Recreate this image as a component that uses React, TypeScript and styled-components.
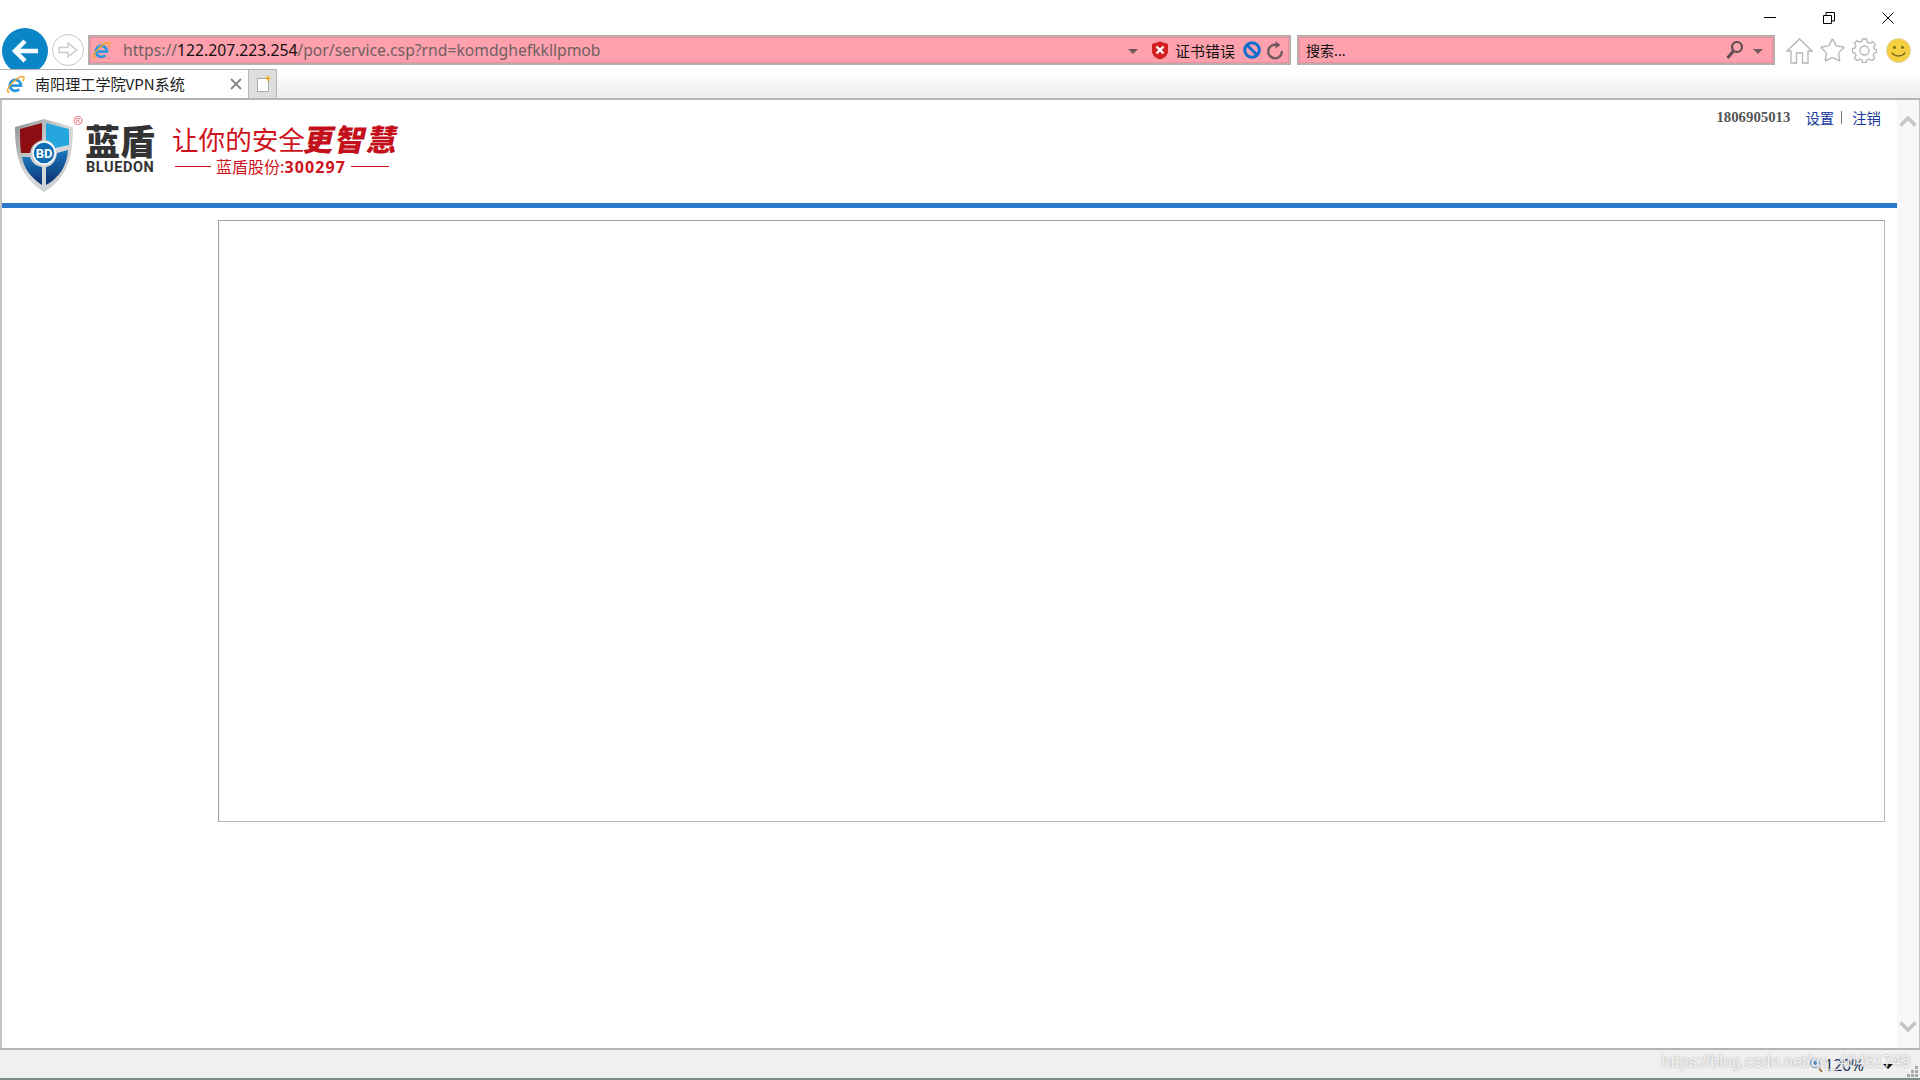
import React from 'react';
import styled, { createGlobalStyle } from 'styled-components';
import { Star } from 'lucide-react';

const GlobalStyle = createGlobalStyle`
  html, body {
    margin: 0;
    height: 100%;
    overflow: hidden;
    background: #fff;
  }
`;

const UI_FONT = `"Noto Sans", "Noto Sans CJK SC", sans-serif`;
const CJK_FONT = `"Noto Sans CJK SC", "Noto Sans", sans-serif`;

const Window = styled.div`
  width: 1920px;
  height: 1080px;
  display: flex;
  flex-direction: column;
  font-family: ${UI_FONT};
  color: #222;
  overflow: hidden;
  position: relative;
`;

const TitleBar = styled.div`
  height: 28px;
  flex: none;
  display: flex;
  justify-content: flex-end;
  align-items: flex-start;
  padding: 12px 26px 0 0;
  box-sizing: border-box;
  gap: 47px;
`;

const WindowButton = styled.svg`
  width: 12px;
  height: 12px;
  display: block;
  stroke: #000;
  fill: none;
`;

const Toolbar = styled.div`
  height: 41px;
  flex: none;
  display: flex;
  align-items: flex-start;
  padding-left: 2px;
`;

const BackButton = styled.div`
  width: 46px;
  height: 46px;
  flex: none;
  border-radius: 50%;
  background: #0a85c6;
  display: flex;
  align-items: center;
  justify-content: center;
`;

const ForwardButton = styled.div`
  width: 30px;
  height: 30px;
  flex: none;
  margin: 6px 0 0 4px;
  border: 1px solid #c9c9c9;
  border-radius: 50%;
  display: flex;
  align-items: center;
  justify-content: center;
`;

const Field = styled.div<{ $width: number; $left: number }>`
  width: ${(p) => p.$width}px;
  margin-left: ${(p) => p.$left}px;
  height: 30px;
  flex: none;
  margin-top: 7px;
  box-sizing: border-box;
  display: flex;
  align-items: center;
  background: #ffa1ad;
  border: 2px solid #b9adae;
  box-shadow: inset 0 0 0 1px #f48c9b;
  font-size: 15px;
  white-space: nowrap;
`;

const PageIcon = styled.span`
  display: flex;
  flex: none;
  margin: 0 12px 0 2px;
`;

const Url = styled.div`
  flex: 1;
  color: #6f6064;
  font-size: 15.7px;
  b {
    color: #111;
    font-weight: 400;
  }
`;

const Caret = styled.span<{ $dark?: boolean }>`
  width: 0;
  height: 0;
  flex: none;
  margin-top: 2px;
  border-left: 5px solid transparent;
  border-right: 5px solid transparent;
  border-top: 5px solid ${(p) => (p.$dark ? '#111' : '#6f5a5e')};
`;

const SearchCaret = styled(Caret)`
  margin: 2px 10px 0 9px;
`;

const CertShield = styled.svg`
  flex: none;
  margin-left: 13px;
`;

const CertText = styled.span`
  font-family: ${CJK_FONT};
  font-size: 15px;
  margin: 0 8px 0 6px;
  color: #111;
`;

const RefreshIcon = styled.svg`
  flex: none;
  margin: 0 5px 0 5px;
`;

const SearchHint = styled.div`
  flex: 1;
  padding-left: 7px;
  font-family: ${CJK_FONT};
  font-size: 14px;
  color: #111;
`;

const ToolIcons = styled.div`
  display: flex;
  align-items: center;
  gap: 6px;
  margin: 9px 0 0 11px;
`;

const Smiley = styled.svg`
  flex: none;
  margin-left: 3px;
`;

const TabRow = styled.div`
  height: 31px;
  flex: none;
  position: relative;
  display: flex;
  align-items: stretch;
  box-sizing: border-box;
  border-bottom: 2px solid #b4b4b4;
  background: linear-gradient(#ffffff 10%, #ececec 100%);
`;

const Tab = styled.div`
  width: 249px;
  box-sizing: border-box;
  display: flex;
  align-items: center;
  background: #fff;
  border-top: 1px solid #b4b4b4;
  border-right: 1px solid #b4b4b4;
  padding: 0 6px 0 6px;
`;

const TabTitle = styled.span`
  flex: 1;
  margin-left: 10px;
  padding-bottom: 2px;
  font-family: ${CJK_FONT};
  font-size: 15.1px;
  color: #222;
  white-space: nowrap;
`;

const NewTab = styled.div`
  width: 28px;
  box-sizing: border-box;
  padding-left: 2px;
  background: #dedede;
  border-top: 1px solid #b4b4b4;
  border-right: 1px solid #b4b4b4;
  display: flex;
  align-items: center;
  justify-content: center;
`;

const Viewport = styled.div`
  flex: 1;
  min-height: 0;
  display: flex;
  border-left: 2px solid #c4c4c4;
  border-right: 1px solid #c4c4c4;
  border-bottom: 2px solid #b4b4b4;
`;

const Page = styled.div`
  width: 1895px;
  flex: none;
  display: flex;
  flex-direction: column;
`;

const Banner = styled.div`
  height: 108px;
  flex: none;
  box-sizing: border-box;
  display: flex;
  align-items: flex-start;
  border-bottom: 5px solid #2b77c9;
  padding: 9px 16px 0 11px;
`;

const ShieldSvg = styled.svg`
  flex: none;
  margin-top: 7px;
`;

const Brand = styled.div`
  display: flex;
  flex-direction: column;
  width: 72px;
  margin-top: 14px;
  color: #333;
`;

const BrandName = styled.span`
  font-family: ${CJK_FONT};
  font-weight: 900;
  font-size: 35px;
  line-height: 33px;
  white-space: nowrap;
`;

const BrandLatin = styled.span`
  font-family: "Roboto", sans-serif;
  font-weight: 700;
  font-size: 14.5px;
  letter-spacing: 0.6px;
  line-height: 16px;
  margin: 4px 0 0 1px;
`;

const Slogan = styled.div`
  margin: 7px 0 0 15px;
  display: flex;
  flex-direction: column;
  color: #d0121b;
  width: 235px;
`;

const SloganTop = styled.div`
  display: flex;
  align-items: center;
  height: 36px;
  margin-top: 4px;
  font-family: ${CJK_FONT};
  font-size: 26.6px;
  white-space: nowrap;
`;

const Brush = styled.span`
  font-weight: 900;
  font-size: 30px;
  letter-spacing: 1.5px;
  transform: skewX(-12deg);
  color: #c4101a;
`;

const SloganBottom = styled.div`
  display: flex;
  align-items: center;
  gap: 5px;
  height: 20px;
  padding-left: 3px;
  font-family: ${CJK_FONT};
  font-size: 16px;
  white-space: nowrap;
  b {
    font-family: "Noto Sans", sans-serif;
    font-weight: 700;
    letter-spacing: 1.1px;
  }
`;

const Rule = styled.span<{ $width: number }>`
  width: ${(p) => p.$width}px;
  height: 1px;
  flex: none;
  background: #d0121b;
`;

const UserLinks = styled.div`
  margin: -4px 0 0 auto;
  display: flex;
  align-items: center;
  height: 24px;
  font-size: 14.4px;
`;

const UserName = styled.span`
  font-family: "Liberation Serif", serif;
  font-weight: 700;
  font-size: 14.8px;
  color: #555;
  margin-right: 15px;
`;

const NavLink = styled.a`
  font-family: ${CJK_FONT};
  color: #16399a;
`;

const Divider = styled.span`
  width: 1px;
  height: 13px;
  background: #777;
  margin: 0 10px 0 7px;
`;

const Frame = styled.div`
  width: 1667px;
  height: 602px;
  margin: 12px 0 0 216px;
  box-sizing: border-box;
  border: 1px solid #a0a0a0;
  border-right-color: #b8b8b8;
  border-bottom-color: #b8b8b8;
`;

const ScrollBar = styled.div`
  flex: 1;
  background: #f8f8f8;
  display: flex;
  flex-direction: column;
  justify-content: space-between;
  align-items: center;
  padding: 15px 0 15px;
`;

const StatusBar = styled.div`
  height: 28px;
  flex: none;
  background: #f0f0f0;
  border-bottom: 2px solid #7d8a8e;
  display: flex;
  align-items: center;
  justify-content: flex-end;
  position: relative;
`;

const Zoom = styled.div`
  display: flex;
  align-items: center;
  font-size: 15.5px;
  color: #1b1b1b;
  margin: 2px 27px 0 0;
`;

const ZoomValue = styled.span`
  margin: 0 19px 0 2px;
  color: #0f2a55;
`;

const Watermark = styled.span`
  position: absolute;
  right: 10px;
  top: 2px;
  font-family: "Liberation Sans", sans-serif;
  font-size: 16.2px;
  color: rgba(255, 255, 255, 0.85);
  text-shadow: 0 0 2px rgba(110, 110, 110, 0.7);
  white-space: nowrap;
`;

const Grip = styled.svg`
  position: absolute;
  right: 1px;
  bottom: 0;
  width: 12px;
  height: 12px;
  fill: #a8a8a8;
`;

const IeIcon = ({ size = 19 }: { size?: number }) => (
  <svg width={size} height={size} viewBox="0 0 20 20" fill="none">
    <path d="M3.8 11.2H15.6A5.8 5.8 0 1 0 13.9 15" stroke="#2d97dd" strokeWidth="2.9" />
    <path d="M4 17.5C1 19 0.5 16.5 3.5 12C7 6.5 14 1.5 17.5 1.5C19.5 1.5 19.5 3.5 17.5 6.5" stroke="#eda72c" strokeWidth="1.5" />
  </svg>
);

const ShieldLogo = () => (
  <ShieldSvg width="72" height="78" viewBox="0 0 72 78">
    <defs>
      <linearGradient id="silver" x1="0" y1="0" x2="1" y2="1">
        <stop offset="0" stopColor="#8c8f92" />
        <stop offset="0.5" stopColor="#d9dadb" />
        <stop offset="1" stopColor="#c6c7c8" />
      </linearGradient>
      <linearGradient id="blueLow" x1="0" y1="0" x2="0" y2="1">
        <stop offset="0" stopColor="#1a78bb" />
        <stop offset="1" stopColor="#0b2f70" />
      </linearGradient>
    </defs>
    <path d="M31 3 L60 11 C60 42 54 62 31 76 C8 62 2 42 2 11 Z" fill="url(#silver)" />
    <path d="M7 13 L29 7 V24 C22 26 18 30 17 37 H8 C7 30 7 20 7 13 Z" fill="#8e0d12" />
    <path d="M33 7 L56 13 V29 L42 32 C40 27 37 25 33 24 Z" fill="#25a6de" />
    <path d="M9 41 H17 C19 47 23 50 29 51 V69 C17 61 11 52 9 41 Z" fill="url(#blueLow)" />
    <path d="M33 51 C39 50 43 45 44 37 L55 34 C54 50 46 62 33 69 Z" fill="url(#blueLow)" />
    <circle cx="31" cy="37" r="11" fill="#0e6cb3" stroke="#fff" strokeWidth="1.5" />
    <text x="31" y="42" textAnchor="middle" fontFamily="Roboto, sans-serif" fontWeight="700" fontSize="13" fill="#fff">BD</text>
    <circle cx="65" cy="4.5" r="4" fill="none" stroke="#f08a90" strokeWidth="1.2" />
    <text x="65" y="7" textAnchor="middle" fontFamily="Liberation Sans, sans-serif" fontSize="6.5" fill="#e8666e">R</text>
  </ShieldSvg>
);

export default function App() {
  return (
    <Window>
      <GlobalStyle />
      <TitleBar>
        <WindowButton viewBox="0 0 12 12">
          <path d="M0 5.5H12" />
        </WindowButton>
        <WindowButton viewBox="0 0 12 12">
          <path d="M0.5 3.5H8.5V11.5H0.5Z M3 3V0.5H11.5V9H9" />
        </WindowButton>
        <WindowButton viewBox="0 0 12 12">
          <path d="M0.5 0.5L11.5 11.5M11.5 0.5L0.5 11.5" />
        </WindowButton>
      </TitleBar>

      <Toolbar>
        <BackButton>
          <svg width="28" height="26" viewBox="0 0 28 26" fill="none" stroke="#f6fbff" strokeWidth="4.5">
            <path d="M14 3L4 13L14 23M4 13H27" />
          </svg>
        </BackButton>
        <ForwardButton>
          <svg width="20" height="18" viewBox="0 0 20 18" fill="none" stroke="#c8c8c8" strokeWidth="1.4">
            <path d="M1 6.5H10V2L18.5 9L10 16V11.5H1Z" />
          </svg>
        </ForwardButton>
        <Field $width={1203} $left={4}>
          <PageIcon>
            <IeIcon />
          </PageIcon>
          <Url>
            https://<b>122.207.223.254</b>/por/service.csp?rnd=komdghefkkllpmob
          </Url>
          <Caret />
          <CertShield width="18" height="19" viewBox="0 0 18 19">
            <path d="M9 0.5L17 3V10C17 14.5 13.5 17 9 18.5C4.5 17 1 14.5 1 10V3Z" fill="#cf1f1f" />
            <path d="M5.5 5.5L12.5 12.5M12.5 5.5L5.5 12.5" stroke="#fff" strokeWidth="2.4" />
          </CertShield>
          <CertText>证书错误</CertText>
          <svg width="18" height="18" viewBox="0 0 18 18" fill="none" stroke="#0f6fd0" strokeWidth="3">
            <circle cx="9" cy="9" r="7.3" />
            <path d="M4 4L14 14" />
          </svg>
          <RefreshIcon width="18" height="20" viewBox="0 0 18 20" fill="none" stroke="#6f5a5e" strokeWidth="2.4">
            <path d="M11.5 5.2A6.8 6.8 0 1 0 15.8 11" />
            <path d="M9.5 1L14.5 5L9.5 8.5Z" fill="#6f5a5e" stroke="none" />
          </RefreshIcon>
        </Field>
        <Field $width={478} $left={6}>
          <SearchHint>搜索...</SearchHint>
          <svg width="18" height="20" viewBox="0 0 18 20" fill="none" stroke="#5f4c50" strokeWidth="2.2">
            <circle cx="11" cy="7" r="5" />
            <path d="M7.5 11L1.5 18" strokeWidth="3" />
          </svg>
          <SearchCaret />
        </Field>
        <ToolIcons>
          <svg width="27" height="26" viewBox="0 0 27 26" fill="none" stroke="#b5b5b5" strokeWidth="1.3">
            <path d="M1 13L13.5 1L26 13H22V25H16.5V15H10.5V25H5V13Z" />
          </svg>
          <Star size={27} color="#b5b5b5" strokeWidth={1.2} />
          <svg width="25" height="25" viewBox="0 0 25 25" fill="none" stroke="#b5b5b5" strokeWidth="1.3">
            <circle cx="12.5" cy="12.5" r="4.5" />
            <path d="M10.5 1H14.5L15.3 4.2L18 5.3L20.8 3.6L23.4 6.5L21.6 9.2L22.6 11.3L24.5 11.5V14.5L22.3 15L21.3 17.6L22.5 20.5L19.8 22.8L17 21L14.8 22L14.3 24.5H10.5L10 22L7.7 21L5 22.7L2.3 20L4 17.3L2.9 15L0.5 14.5V10.5L3 10L3.9 7.7L2.4 5L5 2.6L7.7 4.2L10 3.2Z" />
          </svg>
          <Smiley width="25" height="25" viewBox="0 0 25 25">
            <circle cx="12.5" cy="12.5" r="12" fill="#f5cf3f" stroke="#d9d2b8" strokeWidth="0.8" />
            <circle cx="8.5" cy="9.5" r="1.4" fill="#7a6a1c" />
            <circle cx="16.5" cy="9.5" r="1.4" fill="#7a6a1c" />
            <path d="M6 14.5C8 19 17 19 19 14.5" fill="none" stroke="#7a6a1c" strokeWidth="1.5" />
          </Smiley>
        </ToolIcons>
      </Toolbar>

      <TabRow>
        <Tab>
          <IeIcon />
          <TabTitle>南阳理工学院VPN系统</TabTitle>
          <svg width="12" height="12" viewBox="0 0 12 12" stroke="#8a8a8a" strokeWidth="2">
            <path d="M1 1L11 11M11 1L1 11" />
          </svg>
        </Tab>
        <NewTab>
          <svg width="16" height="18" viewBox="0 0 16 18">
            <path d="M1.5 3.5H12.5V16.5H1.5Z" fill="#fff" stroke="#aaa" />
            <path d="M12 0L13 2.5L15.5 3L13 4.2L12 7L11 4.2L8.5 3L11 2.5Z" fill="#f2a51f" />
          </svg>
        </NewTab>
      </TabRow>

      <Viewport>
        <Page>
          <Banner>
            <ShieldLogo />
            <Brand>
              <BrandName>蓝盾</BrandName>
              <BrandLatin>BLUEDON</BrandLatin>
            </Brand>
            <Slogan>
              <SloganTop>
                让你的安全<Brush>更智慧</Brush>
              </SloganTop>
              <SloganBottom>
                <Rule $width={36} />
                <span>
                  蓝盾股份:<b>300297</b>
                </span>
                <Rule $width={38} />
              </SloganBottom>
            </Slogan>
            <UserLinks>
              <UserName>1806905013</UserName>
              <NavLink>设置</NavLink>
              <Divider />
              <NavLink>注销</NavLink>
            </UserLinks>
          </Banner>
          <Frame />
        </Page>
        <ScrollBar>
          <svg width="18" height="12" viewBox="0 0 18 12" fill="none" stroke="#c4c4c4" strokeWidth="3.5">
            <path d="M1.5 10.5L9 3L16.5 10.5" />
          </svg>
          <svg width="18" height="12" viewBox="0 0 18 12" fill="none" stroke="#c4c4c4" strokeWidth="3.5">
            <path d="M1.5 1.5L9 9L16.5 1.5" />
          </svg>
        </ScrollBar>
      </Viewport>

      <StatusBar>
        <Watermark>https://blog.csdn.net/qq_40461749</Watermark>
        <Zoom>
          <svg width="14" height="16" viewBox="0 0 14 16" fill="none">
            <circle cx="6" cy="6" r="4.5" fill="#d8e8f6" stroke="#5b93c9" />
            <path d="M4 6H8M6 4V8" stroke="#1b62b0" />
            <path d="M9 10L13 15" stroke="#9a6a3a" strokeWidth="1.8" />
          </svg>
          <ZoomValue>120%</ZoomValue>
          <Caret $dark />
        </Zoom>
        <Grip viewBox="0 0 12 12">
          <rect x="8" y="0" width="3" height="3" />
          <rect x="4" y="4" width="3" height="3" />
          <rect x="8" y="4" width="3" height="3" />
          <rect x="0" y="8" width="3" height="3" />
          <rect x="4" y="8" width="3" height="3" />
          <rect x="8" y="8" width="3" height="3" />
        </Grip>
      </StatusBar>
    </Window>
  );
}
